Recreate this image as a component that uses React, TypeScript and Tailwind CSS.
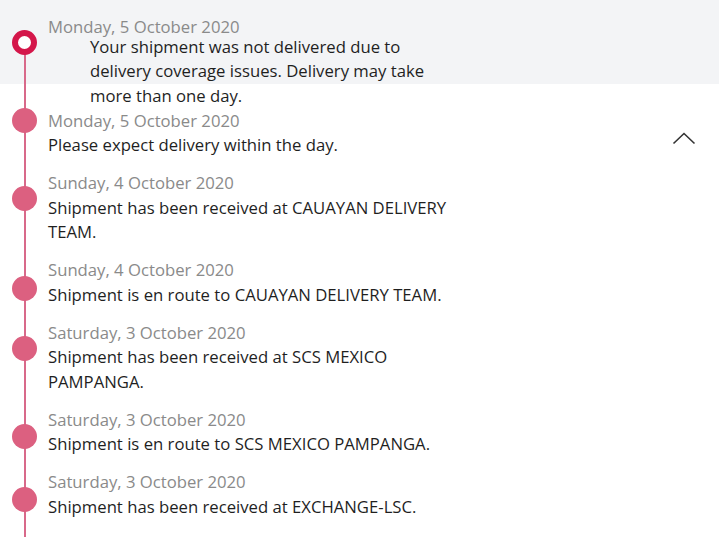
import { ReactNode } from 'react'

type Step = {
  date: string
  text: string
  dot: string // tailwind top offset of the marker inside the row
}

const STEPS: Step[] = [
  { date: 'Monday, 5 October 2020', text: 'Please expect delivery within the day.', dot: 'top-[-1.25px]' },
  { date: 'Sunday, 4 October 2020', text: 'Shipment has been received at CAUAYAN DELIVERY TEAM.', dot: 'top-[15px]' },
  { date: 'Sunday, 4 October 2020', text: 'Shipment is en route to CAUAYAN DELIVERY TEAM.', dot: 'top-[17.5px]' },
  { date: 'Saturday, 3 October 2020', text: 'Shipment has been received at SCS MEXICO PAMPANGA.', dot: 'top-[15.5px]' },
  { date: 'Saturday, 3 October 2020', text: 'Shipment is en route to SCS MEXICO PAMPANGA.', dot: 'top-[16.5px]' },
  { date: 'Saturday, 3 October 2020', text: 'Shipment has been received at EXCHANGE-LSC.', dot: 'top-[16.5px]' },
  { date: 'Friday, 2 October 2020', text: 'Shipment has been picked up.', dot: 'top-[16.5px]' },
]

function Dot({ pos }: { pos: string }) {
  return <div className={`absolute left-[12px] w-[25px] h-[25px] rounded-full bg-[#dc6080] ${pos}`} />
}

function Row({ step, extra }: { step: Step; extra?: ReactNode }) {
  return (
    <div className="relative flex justify-between pl-[48px] pb-[13.5px]">
      <Dot pos={step.dot} />
      <div className="flex flex-col max-w-[412px]">
        <p className="text-[#8a8a8a] leading-[24.5px]">{step.date}</p>
        <p className="text-[#1f1f1f] leading-[24.5px]">{step.text}</p>
      </div>
      {extra}
    </div>
  )
}

export default function App() {
  return (
    <div className="relative w-[719px] h-[537px] overflow-hidden bg-white font-['Open_Sans',sans-serif] text-[16.7px]">
      {/* rail */}
      <div className="absolute left-[23.5px] top-[42px] bottom-0 w-[2px] bg-[#d8698a]" />

      {/* latest event, highlighted */}
      <div className="h-[84px] bg-[#f3f4f6] pt-[19.25px]">
        <div className="relative flex flex-col pl-[48px]">
          <div className="absolute left-[12px] top-[10.25px] w-[25px] h-[25px] rounded-full border-[6px] border-[#d4164a] bg-white" />
          <p className="text-[#8a8a8a] leading-[15.5px]">Monday, 5 October 2020</p>
          <p className="relative ml-[42px] max-w-[360px] text-[#1f1f1f] leading-[24.5px]">
            Your shipment was not delivered due to delivery coverage issues. Delivery may take more than one day.
          </p>
        </div>
      </div>

      <div className="relative flex flex-col mt-[24.75px]">
        {STEPS.map((s, i) => (
          <Row
            key={i}
            step={s}
            extra={i === 0 ? (
              <svg width="24" height="14" viewBox="0 0 24 14" className="mt-[23px] mr-[23px] shrink-0">
                <path d="M1.5 11.5 L12 1.5 L22.5 11.5" fill="none" stroke="#333" strokeWidth="1.6" />
              </svg>
            ) : undefined}
          />
        ))}
      </div>
    </div>
  )
}
